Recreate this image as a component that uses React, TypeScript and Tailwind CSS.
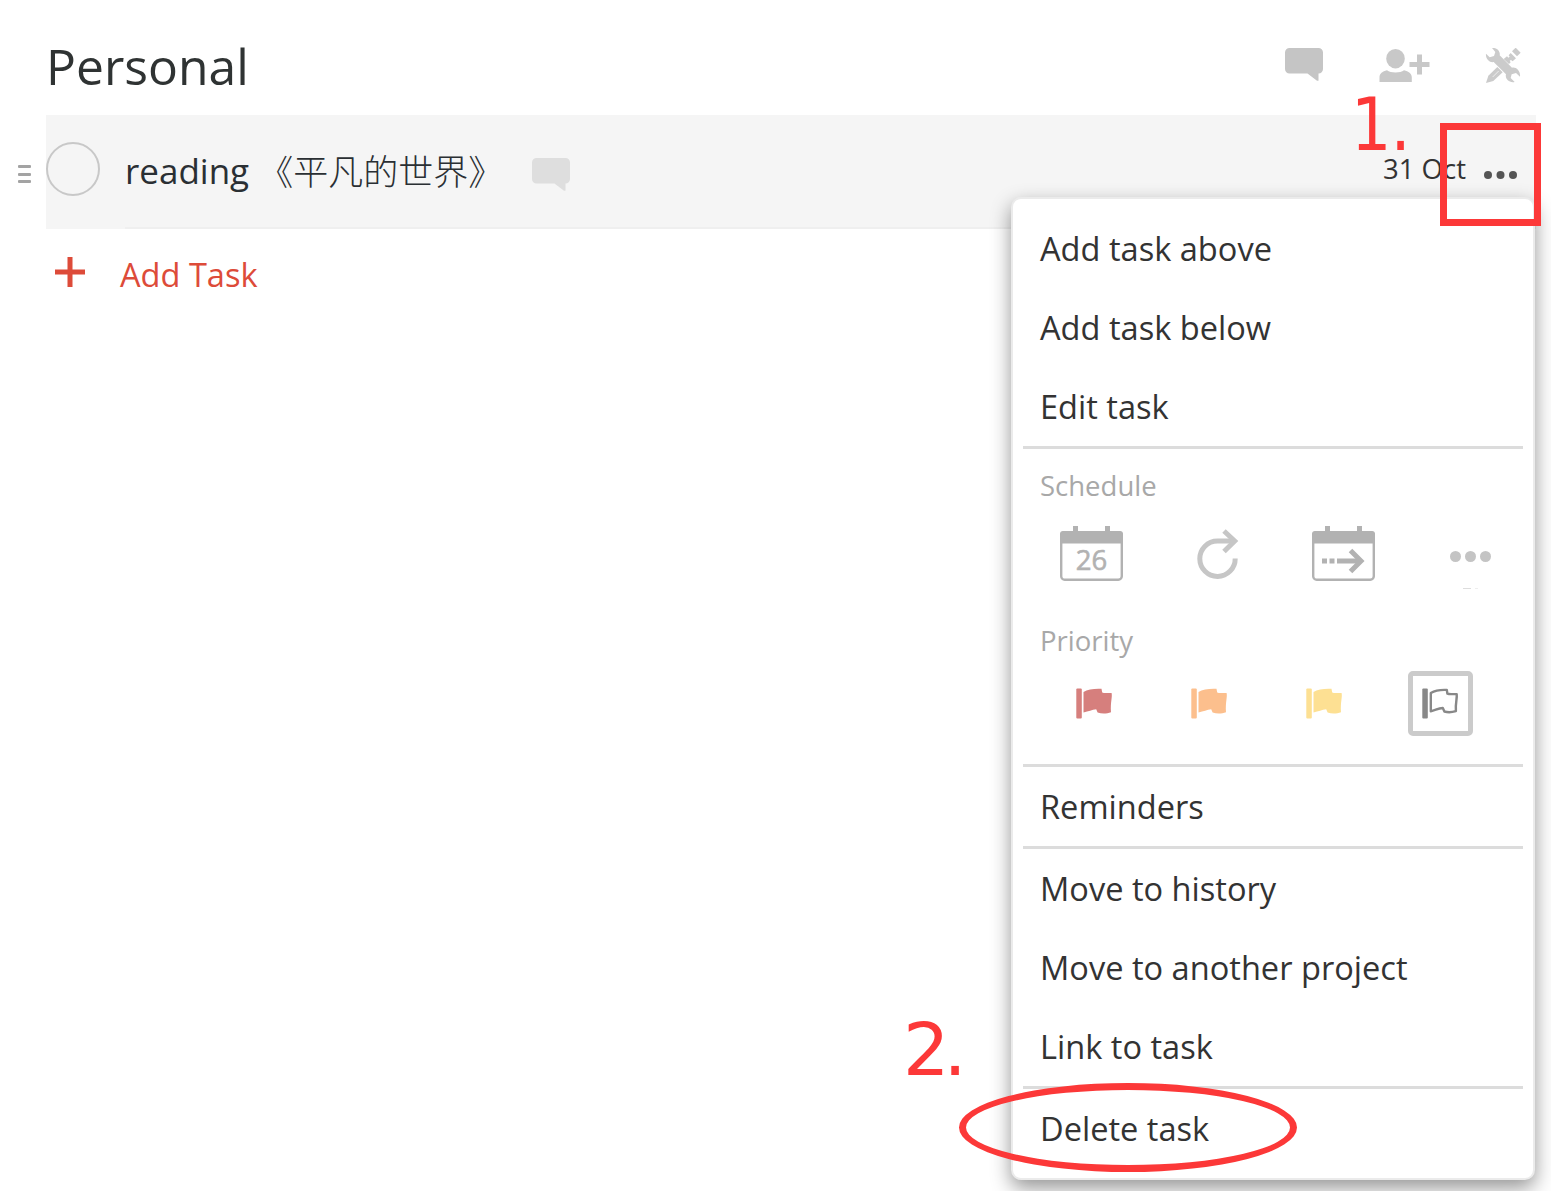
import React from "react";

const font = "font-['Open_Sans','Noto_Sans_CJK_SC',sans-serif]";

function CommentIcon({ className }: { className: string }) {
  return (
    <svg viewBox="0 0 38 33" className={`h-[33px] w-[38px] shrink-0 ${className}`} fill="currentColor">
      <path d="M4.500 0h29A4.500 4.500 0 0 1 38 4.500v16.500a4.500 4.500 0 0 1-4.500 4.500v7.200h-1.500L22.500 25.500h-18A4.500 4.500 0 0 1 0 21V4.500A4.500 4.500 0 0 1 4.500 0z" />
    </svg>
  );
}

function AddPersonIcon() {
  return (
    <svg viewBox="0 0 51 33" className="h-[33px] w-[51px] text-[#c8c8c8]" fill="currentColor">
      <ellipse cx="16.500" cy="9.700" rx="9.300" ry="9.700" />
      <path d="M.5 33v-4.500c0-4 3-6 7.500-7.200 2 1.500 5 2.200 8.500 2.200s6.500-.7 8.500-2.200c4.500 1.200 7.800 3.200 7.800 7.200V33z" />
      <path d="M38 5.500h5v7.500h7.500v5H43V25.500h-5v-7.500h-7.500v-5H38z" />
    </svg>
  );
}

function ToolsIcon() {
  return (
    <svg viewBox="15 18 108 108" className="h-9 w-9 text-[#cbcbcb]" fill="currentColor">
      <path d="M36 18C50 16 62 28 59 40L96 77C108 74 122 86 120 104L108 93 95 97 92 108 104 120C88 124 74 110 78 97L41 60C30 63 16 50 18 35L29 46 42 42 46 30z" />
      <path d="M107 17l15 15-11 11-15-15z" />
      <path d="M92 33l16 16-10 9-5-4-4 2 3 5-5 5-16-15 10-8 4 4 4-3-3-4z" />
      <path d="M52 75l16 16-28 26-22 6 7-22z" />
      <path d="M56 87L38 105" stroke="#ffffff" strokeWidth="2" />
    </svg>
  );
}

function Dots({ className, r, gap }: { className: string; r: number; gap: number }) {
  const width = gap * 2 + r * 2;
  return (
    <svg viewBox={`0 0 ${width} ${r * 2}`} width={width} height={r * 2} className={className} fill="currentColor">
      {[0, 1, 2].map((i) => (
        <circle key={i} cx={r + gap * i} cy={r} r={r} />
      ))}
    </svg>
  );
}

function CalendarIcon({ children }: { children: React.ReactNode }) {
  return (
    <svg viewBox="0 0 63 55" className="h-[55px] w-[63px] text-[#b2b2b2]" fill="currentColor">
      <path d="M13 0h5v6h-5zM45 0h5v6h-5z" />
      <path d="M3 5h57a3 3 0 0 1 3 3v9.500H0V8a3 3 0 0 1 3-3z" />
      <rect x="1.200" y="6.200" width="60.600" height="47.600" rx="3.500" fill="none" stroke="currentColor" strokeWidth="2.400" />
      {children}
    </svg>
  );
}

function RepeatIcon() {
  return (
    <svg viewBox="0 0 42 50" className="h-[50px] w-[42px] text-[#c6c6c6]" fill="none" stroke="currentColor" strokeWidth="5">
      <path d="M38.200 29.500A17.700 17.700 0 1 1 20.500 12H36" />
      <path d="M27 2L37.700 12 27 22.500" />
    </svg>
  );
}

function FlagIcon({ className, outline = false }: { className: string; outline?: boolean }) {
  const cloth = outline
    ? "M8.800 5C12.500 2.800 19 1.600 24.800 1.900L25.400 5.700C28 6.700 31 5.800 34.700 6.200 35.300 10.500 33.300 14 33.900 23.200 30 24.300 26 24.600 22.400 23.500L20.800 20C16 20.300 13 22.500 8.800 23.200z"
    : "M7.500 3.900C11.500 1.500 19 .3 25.500.8L26.200 4.500C29 5.500 31.500 4.600 35.600 5 36.500 9.500 34.300 14 35 24.200 31 25.600 26 25.900 21.600 24.500L20.200 21.300C16 21.600 12.500 23.700 7.500 24.400z";
  return (
    <svg viewBox="0 0 37 31" className={`h-[31px] w-[37px] ${className}`} fill="currentColor">
      <rect x=".3" y=".5" width="5.500" height="30" rx="1" />
      <path
        d={cloth}
        fill={outline ? "none" : "currentColor"}
        stroke={outline ? "currentColor" : "none"}
        strokeWidth="2.400"
        strokeLinejoin="round"
      />
    </svg>
  );
}

function Item({ children }: { children: React.ReactNode }) {
  return (
    <button className="flex h-[79px] w-full items-center px-[17px] pt-[2px] text-left text-[32.600px] leading-none whitespace-nowrap text-[#333]">
      {children}
    </button>
  );
}

function Divider() {
  return <div className="h-[3px] bg-[#dcdcdc]" />;
}

function TaskMenu() {
  return (
    <div className="absolute top-[197px] left-[1011px] w-[524px] rounded-[10px] border-2 border-[#ebebeb] bg-white px-2.5 pt-2.5 pb-2.5 shadow-[0_8px_20px_rgba(0,0,0,0.42)]">
      <Item>Add task above</Item>
      <Item>Add task below</Item>
      <Item>Edit task</Item>
      <Divider />
      <div className="h-[315px] text-[27.500px] text-[#a8a8a8]">
        <div className="flex h-[74px] items-center px-[17px] leading-none">Schedule</div>
        <div className="flex h-[66px] items-start pl-[37px]">
          <div className="flex w-[137px] pt-[3px]">
            <CalendarIcon>
              <text x="31.500" y="43.800" textAnchor="middle" stroke="currentColor" strokeWidth=".6" className="text-[27.500px]">26</text>
            </CalendarIcon>
          </div>
          <div className="w-[115px] pt-[6px]">
            <RepeatIcon />
          </div>
          <div className="w-[138px] pt-[3px]">
            <CalendarIcon>
              <path d="M10 32.500h5v5h-5zM17.500 32.500h5v5h-5zM25 32.500h24v5H25z" />
              <path d="M38.500 24.500L49 35 38.500 45.500" fill="none" stroke="currentColor" strokeWidth="5" />
            </CalendarIcon>
          </div>
          <div className="flex flex-col items-center pt-[28px]">
            <Dots className="text-[#c4c4c4]" r={5.500} gap={15} />
            <div className="mt-[26px] flex gap-1">
              <div className="h-px w-2 bg-[#dddddd]" />
              <div className="h-px w-[3px] bg-[#eeeeee]" />
            </div>
          </div>
        </div>
        <div className="mt-[15px] flex h-[74px] items-center px-[17px] leading-none">Priority</div>
        <div className="flex h-[50px] items-center pl-[53px]">
          <FlagIcon className="mr-[78px] text-[#d67f7d]" />
          <FlagIcon className="mr-[78px] text-[#fcbf8d]" />
          <FlagIcon className="mr-[65px] text-[#fde093]" />
          <div className="flex h-[65px] w-[65px] items-center justify-center rounded-[5px] border-5 border-[#cbcbcb]">
            <FlagIcon outline className="mr-px text-[#888]" />
          </div>
        </div>
      </div>
      <Divider />
      <Item>Reminders</Item>
      <Divider />
      <Item>Move to history</Item>
      <Item>Move to another project</Item>
      <Item>Link to task</Item>
      <Divider />
      <Item>Delete task</Item>
    </div>
  );
}

export default function App() {
  return (
    <div className={`relative h-[1191px] w-[1551px] overflow-hidden bg-white ${font}`}>
      <header className="flex h-[115px] items-start justify-between pr-[30px] pl-[46px]">
        <h1 className="pt-[41px] text-[49.800px] leading-[50px] text-[#2f3333]">Personal</h1>
        <div className="flex items-start pt-[48px]">
          <CommentIcon className="text-[#c5c5c5]" />
          <div className="ml-[56px] pt-px"><AddPersonIcon /></div>
          <div className="ml-[55px]"><ToolsIcon /></div>
        </div>
      </header>

      <main>
        <div className="flex h-[114px] pr-[15px]">
          <div className="flex w-[46px] flex-col gap-[4.500px] pt-[50px] pl-[18px]">
            <div className="h-[3px] w-[13px] rounded-[1px] bg-[#a3a3a3]" />
            <div className="h-[3px] w-[13px] rounded-[1px] bg-[#a3a3a3]" />
            <div className="h-[3px] w-[13px] rounded-[1px] bg-[#a3a3a3]" />
          </div>
          <div className="flex flex-1 bg-[#f5f5f5]">
            <div className="mt-[27px] h-[54px] w-[54px] rounded-full border-2 border-[#c8c8c8]" />
            <div className="ml-[25px] flex flex-1 border-b-2 border-[#efefef]">
              <span className="pt-[38px] text-[35px] leading-[36px] whitespace-nowrap text-[#2a2f33]">
                reading <span className="inline-block translate-y-px font-light">《平凡的世界》</span>
              </span>
              <div className="ml-[29px] pt-[43px]"><CommentIcon className="text-[#dedede]" /></div>
              <span className="ml-auto pt-[40px] text-[27.500px] leading-[28px] text-[#333]">31 Oct</span>
              <Dots className="mt-[56px] mr-[19px] ml-[18px] text-[#555]" r={4} gap={12.500} />
            </div>
          </div>
        </div>
        <button className="flex h-[92px] items-center pl-[55px] text-[#dd4b39]">
          <svg viewBox="0 0 30 30" className="mb-[6px] h-[30px] w-[30px]" fill="currentColor">
            <path d="M12.500 0h5v12.500H30v5H17.500V30h-5V17.500H0v-5h12.500z" />
          </svg>
          <span className="ml-[35px] text-[32.600px] leading-none">Add Task</span>
        </button>
      </main>

      <TaskMenu />

      <div className="absolute top-[123px] left-[1440px] h-[103px] w-[101px] border-7 border-[#fc3838]" />
      <div className="absolute top-[88px] left-[1351px] origin-left scale-x-[0.87] font-['DejaVu_Sans',sans-serif] text-[73px] leading-[73px] tracking-[-1px] text-[#fc3838]">
        1.
      </div>
      <div className="absolute top-[1013px] left-[903px] font-['DejaVu_Sans',sans-serif] text-[73px] leading-[73px] tracking-[-6px] text-[#fc3838]">
        2.
      </div>
      <div className="absolute top-[1083px] left-[959px] h-[89px] w-[338px] rounded-[50%] border-7 border-[#fc3838]" />
    </div>
  );
}
